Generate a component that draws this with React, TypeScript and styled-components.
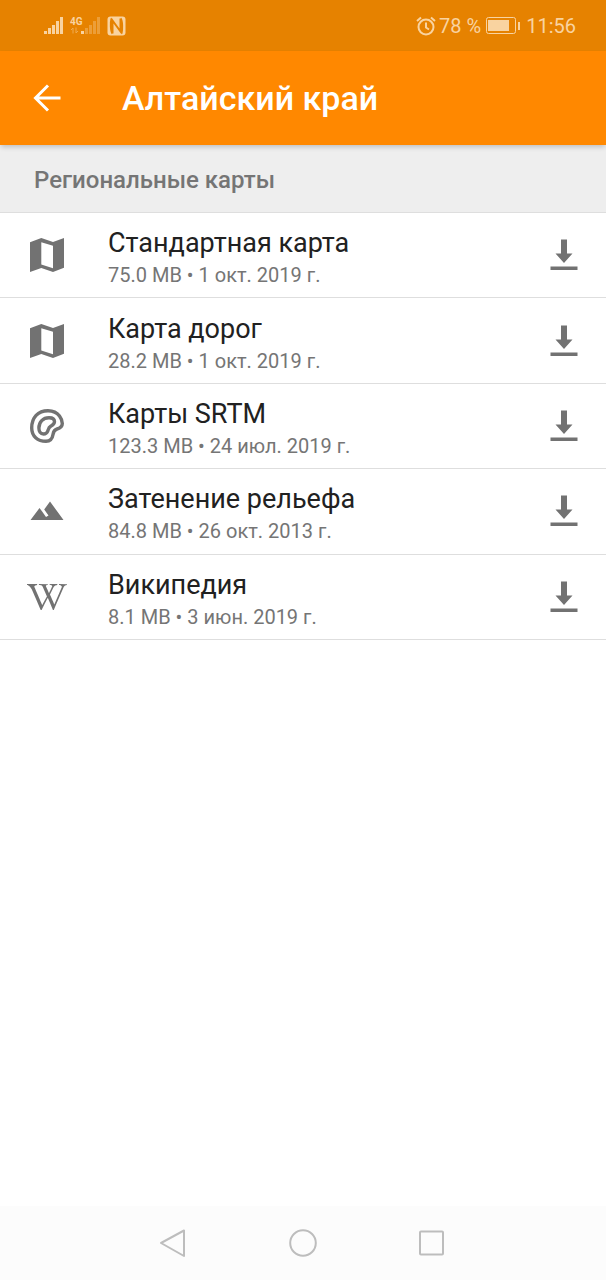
import React from "react";
import styled, { createGlobalStyle } from "styled-components";
import { FaWikipediaW } from "react-icons/fa";

const GlobalStyle = createGlobalStyle`
  * { box-sizing: border-box; }
  body {
    margin: 0;
    background: #ffffff;
    font-family: Roboto, "Noto Sans", sans-serif;
  }
  button {
    margin: 0;
    padding: 0;
    border: 0;
    background: none;
    color: inherit;
    font: inherit;
    cursor: pointer;
  }
  svg { display: block; flex: none; }
`;

const Screen = styled.div`
  display: flex;
  flex-direction: column;
  min-height: 100vh;
`;

const StatusBar = styled.div`
  display: flex;
  align-items: center;
  justify-content: space-between;
  height: 51px;
  padding: 0 30px 0 43px;
  background: #e68200;
  color: #f9d3a0;
  font-size: 20px;
  line-height: 24px;
`;

const StatusGroup = styled.div<{ $gap: number }>`
  display: flex;
  align-items: center;
  gap: ${(p) => p.$gap}px;
`;

const AppBar = styled.header`
  display: flex;
  align-items: center;
  gap: 44px;
  height: 94px;
  padding: 0 16px;
  background: #ff8800;
  color: #ffffff;
  box-shadow: 0 3px 5px -1px rgba(0, 0, 0, 0.2);
  z-index: 1;
`;

const BackButton = styled.button`
  display: flex;
  align-items: center;
  justify-content: center;
  width: 62px;
  height: 62px;
`;

const Title = styled.h1`
  margin: 0;
  font-size: 34px;
  line-height: 40px;
  font-weight: 500;
`;

const SectionTitle = styled.h2`
  margin: 0;
  padding: 21px 34px 18px;
  border-bottom: 1px solid #dedede;
  background: #eeeeee;
  color: #757575;
  font-size: 24px;
  line-height: 28px;
  font-weight: 500;
`;

const MapList = styled.ul`
  display: grid;
  grid-auto-rows: 1fr;
  min-height: 427px;
  margin: 0;
  padding: 0;
  list-style: none;
`;

const MapRow = styled.li`
  display: flex;
  align-items: center;
  padding-right: 14px;
  border-bottom: 1px solid #dedede;
  color: #727272;
`;

const RowIcon = styled.div`
  display: flex;
  align-items: center;
  justify-content: center;
  flex: none;
  width: 94px;
`;

const RowText = styled.div`
  flex: 1;
  min-width: 0;
  padding: 6px 0 0 14px;
`;

const MapName = styled.div`
  color: #212121;
  font-size: 27px;
  line-height: 34px;
`;

const MapMeta = styled.div`
  color: #757575;
  font-size: 20px;
  line-height: 30px;
`;

const DownloadButton = styled.button`
  display: flex;
  align-items: center;
  justify-content: center;
  width: 56px;
  height: 56px;
`;

const NavBar = styled.nav`
  display: flex;
  align-items: center;
  justify-content: center;
  height: 74px;
  margin-top: auto;
  background: #fcfcfc;
  color: #bdbdbd;
`;

const NavButton = styled.button`
  display: flex;
  align-items: center;
  justify-content: center;
  width: 129px;
  height: 74px;
`;

const SignalIcon = () => (
  <svg width="21" height="20" viewBox="0 0 21 20" fill="currentColor">
    <rect x="1" y="15" width="3" height="3" />
    <rect x="5" y="12" width="3" height="6" />
    <rect x="9" y="9" width="3" height="9" />
    <rect x="13" y="5" width="3" height="13" />
    <rect x="17" y="1" width="3" height="17" />
  </svg>
);

const NetworkLabel = styled.span`
  font-family: "Liberation Sans Narrow", Roboto, sans-serif;
  font-size: 10px;
  line-height: 11px;
  font-weight: 700;
`;

const NetworkType = styled.div`
  display: flex;
  flex-direction: column;
  align-items: flex-start;
  width: 11px;
  height: 20px;
`;

const SecondSignal = styled.div`
  display: flex;
  align-items: center;
`;

const DataArrowsIcon = () => (
  <svg width="10" height="7" viewBox="0 0 10 7" fill="none" stroke="currentColor" opacity="0.5">
    <path d="M3 6.500V1L1 3M6 0.500V6L8 4" />
  </svg>
);

const WeakSignalIcon = () => (
  <svg width="20" height="20" viewBox="0 0 20 20" fill="currentColor">
    <rect x="0" y="15" width="3" height="3" />
    <g opacity="0.35">
      <rect x="4" y="12" width="3" height="6" />
      <rect x="8" y="9" width="3" height="9" />
      <rect x="12" y="5" width="3" height="13" />
      <rect x="16" y="1" width="3" height="17" />
    </g>
  </svg>
);

const NfcIcon = () => (
  <svg width="19" height="20" viewBox="0 0 19 20">
    <rect x="0.500" y="0.500" width="18" height="19" rx="3" fill="currentColor" />
    <path
      d="M5.500 17.500V4.500L13.500 15.500V2.500M5.500 17.500C3.500 15.500 3.500 6 4.500 2.500M13.500 2.500C15.500 4.500 15.500 14 14.500 17.500"
      fill="none"
      stroke="#e68200"
      strokeWidth="2"
    />
  </svg>
);

const AlarmIcon = () => (
  <svg width="20" height="20" viewBox="0 0 20 20" fill="none" stroke="currentColor" strokeWidth="2">
    <circle cx="10" cy="11" r="7.500" />
    <path d="M10 6.500V11.500L13 13.500M1 5L5 1.500M19 5L15 1.500" />
  </svg>
);

const BatteryIcon = () => (
  <svg width="35" height="18" viewBox="0 0 35 18">
    <rect x="0.500" y="0.500" width="29" height="16" rx="2" fill="none" stroke="currentColor" />
    <rect x="2" y="3" width="21" height="11" fill="currentColor" />
    <rect x="32" y="5" width="2" height="8" fill="currentColor" />
  </svg>
);

const BackArrowIcon = () => (
  <svg width="28" height="28" viewBox="0 0 28 28" fill="none" stroke="currentColor" strokeWidth="3">
    <path d="M27.500 14H3M15 1.500L2.500 14L15 26.500" />
  </svg>
);

const FoldedMapIcon = () => (
  <svg width="34" height="34" viewBox="0 0 34 34" fill="currentColor" fillRule="evenodd">
    <path d="M0 4.200L11.300 0L23 4L34 0V29.800L23 34L11.300 30L0 34ZM11.300 4.300V26.600L23 30.200V7.800Z" />
  </svg>
);

const ContourIcon = () => (
  <svg width="34" height="34" viewBox="0 0 34 34" fill="none" stroke="currentColor" strokeWidth="3.400">
    <path d="M18 1.700C23 1.700 27 3.500 29.500 7C31.500 9.700 32.300 12 32.300 14.500C32.300 18 30 19.200 27 20C24.500 20.700 23.500 22.500 23 25.500C22.400 29.500 20.500 32.300 16 32.300C7.500 32.300 1.700 27 1.700 19C1.700 8.500 8 1.700 18 1.700Z" />
    <path d="M19 8.700C22 8.700 24.500 10 24.500 12.800C24.500 15.300 22.500 16.200 20.700 17.200C18.500 18.500 18.500 20 17.800 22C17 24.200 15.500 25 13.500 25C10.500 25 8.900 22.500 8.900 19C8.900 13 13 8.700 19 8.700Z" />
  </svg>
);

const MountainsIcon = () => (
  <svg width="34" height="20" viewBox="0 0 34 20" fill="currentColor">
    <path d="M0.500 19L9.500 7L12.500 11L16 16L18.500 14.500L14.200 8.500L20 0.500L33.500 19Z" />
  </svg>
);

const DownloadIcon = () => (
  <svg width="28" height="32" viewBox="0 0 28 32" fill="currentColor">
    <path d="M11 0.500H17V14.500H22.500L14 24L5.500 14.500H11ZM0.500 27.500H27.500V31H0.500Z" />
  </svg>
);

const NavBackIcon = () => (
  <svg width="28" height="28" viewBox="0 0 28 28" fill="none" stroke="currentColor" strokeWidth="2" strokeLinejoin="round">
    <path d="M24 1.500V27L1 14Z" />
  </svg>
);

const NavHomeIcon = () => (
  <svg width="28" height="28" viewBox="0 0 28 28" fill="none" stroke="currentColor" strokeWidth="2">
    <circle cx="14" cy="14" r="12.800" />
  </svg>
);

const NavRecentIcon = () => (
  <svg width="28" height="28" viewBox="0 0 28 28" fill="none" stroke="currentColor" strokeWidth="2">
    <rect x="2" y="2.500" width="23" height="23" rx="1" />
  </svg>
);

const maps = [
  { name: "Стандартная карта", meta: "75.0 MB • 1 окт. 2019 г.", icon: <FoldedMapIcon /> },
  { name: "Карта дорог", meta: "28.2 MB • 1 окт. 2019 г.", icon: <FoldedMapIcon /> },
  { name: "Карты SRTM", meta: "123.3 MB • 24 июл. 2019 г.", icon: <ContourIcon /> },
  { name: "Затенение рельефа", meta: "84.8 MB • 26 окт. 2013 г.", icon: <MountainsIcon /> },
  { name: "Википедия", meta: "8.1 MB • 3 июн. 2019 г.", icon: <FaWikipediaW size={40} /> },
];

export default function App() {
  return (
    <Screen>
      <GlobalStyle />
      <StatusBar>
        <StatusGroup $gap={6}>
          <SignalIcon />
          <SecondSignal>
            <NetworkType>
              <NetworkLabel>4G</NetworkLabel>
              <DataArrowsIcon />
            </NetworkType>
            <WeakSignalIcon />
          </SecondSignal>
          <NfcIcon />
        </StatusGroup>
        <StatusGroup $gap={5}>
          <StatusGroup $gap={3}>
            <AlarmIcon />
            <span>78 %</span>
          </StatusGroup>
          <BatteryIcon />
          <span>11:56</span>
        </StatusGroup>
      </StatusBar>
      <AppBar>
        <BackButton aria-label="Назад">
          <BackArrowIcon />
        </BackButton>
        <Title>Алтайский край</Title>
      </AppBar>
      <main>
        <SectionTitle>Региональные карты</SectionTitle>
        <MapList>
          {maps.map((map) => (
            <MapRow key={map.name}>
              <RowIcon>{map.icon}</RowIcon>
              <RowText>
                <MapName>{map.name}</MapName>
                <MapMeta>{map.meta}</MapMeta>
              </RowText>
              <DownloadButton aria-label={`Скачать: ${map.name}`}>
                <DownloadIcon />
              </DownloadButton>
            </MapRow>
          ))}
        </MapList>
      </main>
      <NavBar>
        <NavButton aria-label="Назад">
          <NavBackIcon />
        </NavButton>
        <NavButton aria-label="Домой">
          <NavHomeIcon />
        </NavButton>
        <NavButton aria-label="Недавние">
          <NavRecentIcon />
        </NavButton>
      </NavBar>
    </Screen>
  );
}
